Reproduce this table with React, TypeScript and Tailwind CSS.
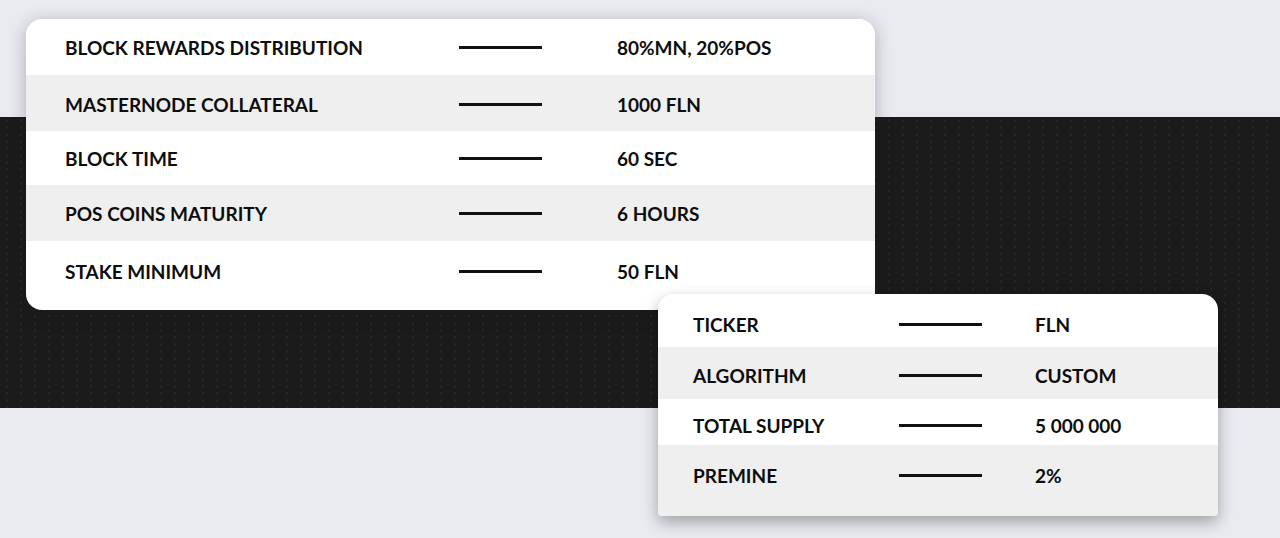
type Row = { label: string; value: string; cls: string }

const mainRows: Row[] = [
  { label: 'BLOCK REWARDS DISTRIBUTION', value: '80%MN, 20%POS', cls: 'h-[56px] bg-white' },
  { label: 'MASTERNODE COLLATERAL', value: '1000 FLN', cls: 'h-[56px] bg-[#efefef] pt-[3px]' },
  { label: 'BLOCK TIME', value: '60 SEC', cls: 'h-[54px] bg-white' },
  { label: 'POS COINS MATURITY', value: '6 HOURS', cls: 'h-[56px] bg-[#efefef]' },
  { label: 'STAKE MINIMUM', value: '50 FLN', cls: 'h-[69px] bg-white pb-[9px]' },
]

const coinRows: Row[] = [
  { label: 'TICKER', value: 'FLN', cls: 'h-[53px] bg-white pt-[7px]' },
  { label: 'ALGORITHM', value: 'CUSTOM', cls: 'h-[52px] bg-[#efefef] pt-[4px]' },
  { label: 'TOTAL SUPPLY', value: '5 000 000', cls: 'h-[46px] bg-white pt-[6px]' },
  { label: 'PREMINE', value: '2%', cls: 'h-[71px] bg-[#efefef] pb-[11px]' },
]

function SpecRow({ row, cols }: { row: Row; cols: string }) {
  return (
    <div className={`grid items-center ${cols} ${row.cls}`}>
      <span>{row.label}</span>
      <span className="h-[3px] w-[83px] bg-[#111]" />
      <span />
      <span>{row.value}</span>
    </div>
  )
}

export default function App() {
  return (
    <div
      className="relative h-[538px] w-[1280px] overflow-hidden bg-[#eaebf0] text-[19px] font-bold leading-none text-[#0d0d0d]"
      style={{ fontFamily: 'Lato, "Open Sans", sans-serif' }}
    >
      {/* dark band with dot texture */}
      <div className="absolute left-0 right-0 top-[117px] h-[291px] bg-[#1b1b1b]">
        <div className="absolute inset-0 bg-[radial-gradient(circle,#272727_0.9px,transparent_1.5px)] bg-[size:14px_7px]" />
      </div>

      <div className="relative flex flex-col">
        <div className="ml-[26px] mt-[19px] w-[849px] overflow-hidden rounded-2xl shadow-[0_3px_18px_rgba(20,20,40,0.28)]">
          {mainRows.map((r) => (
            <SpecRow key={r.label} row={r} cols="grid-cols-[394px_83px_75px_1fr] pl-[39px]" />
          ))}
        </div>

        <div className="ml-[658px] mt-[-16px] w-[560px] overflow-hidden rounded-t-2xl rounded-b-[4px] shadow-[0_6px_16px_rgba(0,0,0,0.32)]">
          {coinRows.map((r) => (
            <SpecRow key={r.label} row={r} cols="grid-cols-[206px_83px_53px_1fr] pl-[35px]" />
          ))}
        </div>
      </div>
    </div>
  )
}
